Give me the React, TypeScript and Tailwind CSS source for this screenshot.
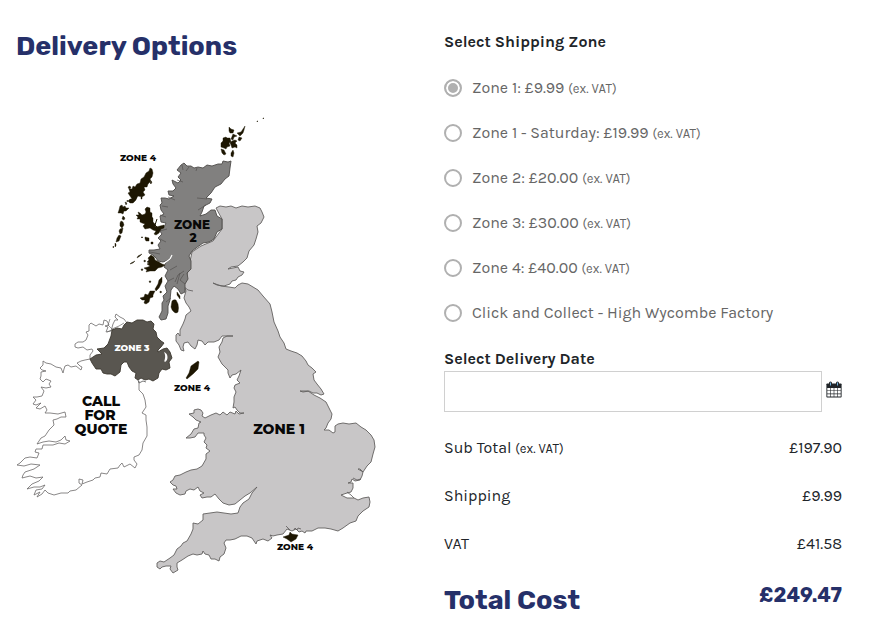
import React, { useState } from "react";

interface ShippingZone {
  id: string;
  name: string;
  price: number;
}

const zones: ShippingZone[] = [
  { id: "zone-1", name: "Zone 1", price: 9.99 },
  { id: "zone-1-saturday", name: "Zone 1 - Saturday", price: 19.99 },
  { id: "zone-2", name: "Zone 2", price: 20 },
  { id: "zone-3", name: "Zone 3", price: 30 },
  { id: "zone-4", name: "Zone 4", price: 40 },
  { id: "collect", name: "Click and Collect - High Wycombe Factory", price: 0 },
];

const SUB_TOTAL = 197.9;

const formatPrice = (value: number) => `£${value.toFixed(2)}`;

function ExVat() {
  return <span className="text-[13px] leading-none">(ex. VAT)</span>;
}

function CalendarIcon() {
  return (
    <svg viewBox="0 0 16 17" className="w-4 h-[17px]" aria-hidden="true">
      <rect x="0.400" y="2.500" width="15.200" height="14" rx="0.800" fill="#212529" />
      <path
        d="M1.300 7h2.900v2.500H1.300zM4.800 7h2.900v2.500H4.800zM8.300 7h2.900v2.500H8.300zM11.800 7h2.900v2.500h-2.900zM1.300 10.100h2.900v2.500H1.300zM4.800 10.100h2.900v2.500H4.800zM8.300 10.100h2.900v2.500H8.300zM11.800 10.100h2.900v2.500h-2.900zM1.300 13.200h2.900v2.400H1.300zM4.800 13.200h2.900v2.400H4.800zM8.300 13.200h2.900v2.400H8.300zM11.800 13.200h2.900v2.400h-2.900z"
        fill="#fff"
      />
      <rect x="3" y="0.500" width="3" height="4.800" rx="1.500" fill="#212529" />
      <rect x="10" y="0.500" width="3" height="4.800" rx="1.500" fill="#212529" />
      <path d="M4.500 1.500v3M11.500 1.500v3" stroke="#6fb0de" strokeWidth="1" />
    </svg>
  );
}

function ZoneMap() {
  return (
    <svg
      viewBox="16 110 398 470"
      className="block w-full"
      role="img"
      aria-label="Map of delivery zones"
      strokeLinejoin="round"
    >
      {/* Republic of Ireland */}
      <path
        d="M127 323L124 319L120 317L116 314L115 317L118 320L115 320L113 324L111 331L106 332L108 327L105 326L109 325L107 321L104 320L103 325L99 324L96 326L91 323L89 325L89 331L86 332L88 335L86 340L83 342L78 342L75 344L75 347L78 348L83 347L87 350L92 349L93 351L90 355L90 359L85 360L81 361L77 363L80 366L82 367L81 370L76 366L71 367L68 365L65 366L64 369L63 373L61 368L56 367L51 364L46 363L43 361L43 365L40 368L42 370L46 371L41 372L41 376L40 379L43 382L46 379L51 381L49 384L51 387L46 388L41 387L44 391L42 396L37 397L33 397L36 400L33 404L36 405L41 403L36 408L40 409L45 406L47 410L45 413L50 413L58 414L65 412L66 417L61 417L57 419L53 420L54 425L49 430L45 436L41 438L37 444L43 442L49 441L56 442L61 440L65 436L66 440L70 441L65 444L59 443L53 445L43 445L42 449L36 449L35 452L39 453L37 458L30 457L25 458L20 463L17 465L24 466L31 464L40 465L34 469L25 472L23 475L22 478L30 476L36 478L43 477L39 481L32 484L27 489L34 487L40 487L45 485L42 489L36 490L34 495L40 492L37 497L42 494L45 490L48 493L54 495L61 493L68 493L70 491L76 490L82 485L79 483L79 479L83 480L82 484L87 482L93 480L95 478L100 477L101 473L107 474L110 469L118 468L120 465L122 463L124 467L130 464L135 468L137 464L134 460L134 457L139 455L142 450L143 443L147 436L147 427L146 420L146 415L142 413L144 410L146 407L145 400L143 394L139 390L139 381"
        fill="#fff"
        stroke="#6c6a69"
        strokeWidth="0.800"
      />
      <path d="M110 319L108 325L112 329L119 326L124 323M107 332L114 329" fill="none" stroke="#6c6a69" strokeWidth="0.700" />

      {/* Zone 1 */}
      <path
        d="M216 208L220 206L226 207L231 206L236 208L242 206L248 207L255 206L260 208L262 212L264 217L261 223L257 226L258 232L256 239L254 245L249 251L247 258L243 262L238 266L231 267L228 269L233 268L238 267L240 271L244 272L242 275L238 277L236 280L232 281L230 284L224 286L217 285L213 283L221 286L229 287L235 288L238 285L242 283L248 284L253 287L258 290L263 296L270 304L272 312L274 322L278 331L280 337L284 343L286 349L291 351L297 353L302 356L306 361L308 365L312 368L316 372L313 374L314 380L317 384L321 389L324 394L321 395L317 393L313 393L309 391L303 392L300 391L308 391L314 395L320 398L326 402L329 408L332 414L331 419L328 423L326 428L324 430L329 430L333 433L335 432L335 426L338 424L343 423L349 424L356 423L361 427L366 430L371 435L374 440L375 447L373 454L371 462L367 466L363 472L360 469L358 469L363 472L362 476L360 480L355 481L352 479L351 482L348 483L353 483L353 488L351 492L347 493L341 495L347 498L354 498L358 500L363 498L369 497L370 502L369 507L363 511L358 516L356 521L350 523L343 528L338 531L331 529L325 528L318 528L312 531L306 531L305 533L302 531L299 532L296 529L292 531L287 529L283 534L277 535L273 536L270 535L272 538L268 541L263 539L257 541L256 544L252 538L247 536L241 536L235 539L230 540L226 540L224 543L226 548L224 554L220 557L219 561L215 559L211 559L209 555L205 554L203 551L202 554L197 555L193 554L188 556L182 560L177 563L177 567L178 570L173 573L170 569L171 566L166 566L162 567L160 569L157 567L157 563L160 561L164 562L170 558L174 555L177 549L181 546L183 543L187 541L191 534L193 529L193 523L198 524L203 520L203 514L210 513L217 512L224 513L231 514L238 513L240 507L243 503L249 499L252 493L257 487L250 493L245 496L240 500L235 504L229 505L223 503L219 499L215 494L211 497L207 497L202 498L200 495L204 493L200 491L198 487L194 490L190 489L186 491L185 494L180 495L176 493L173 489L177 489L176 486L173 485L170 482L173 480L175 476L180 475L186 472L191 470L197 469L202 466L206 459L206 454L210 451L206 448L207 445L204 442L206 438L204 435L204 433L198 433L195 437L190 438L186 438L191 434L194 429L198 428L199 423L201 422L196 420L193 417L189 414L194 413L194 410L198 409L201 410L203 413L202 416L205 418L211 415L216 413L220 415L223 412L227 415L230 412L235 414L236 411L239 414L244 413L240 413L237 410L235 407L233 408L234 402L234 397L236 392L234 388L235 385L240 383L237 380L239 376L241 370L236 374L232 375L230 378L228 373L228 370L222 364L218 357L220 352L219 347L222 342L223 338L227 336L233 336L222 336L219 340L214 342L208 342L205 345L202 341L198 340L197 345L195 349L191 346L188 342L184 343L183 347L184 351L181 350L179 345L176 341L176 335L178 333L180 336L180 330L183 324L185 319L186 315L191 311L189 307L186 303L184 298L186 291L184 286L188 271L192 252L201 246L213 241L222 229L222 219Z"
        fill="#c8c6c7"
        stroke="#62605f"
        strokeWidth="0.900"
      />
      <path d="M183 286L188 290L193 291M353 478L357 480L361 479M347 492L351 495L354 498M286 526L290 530M294 530L295 528L297 530L298 528L301 529" fill="none" stroke="#5b5858" strokeWidth="0.800" />

      {/* Zone 2 */}
      <path
        d="M181 165L184 163L187 166L191 166L194 168L198 167L203 168L207 165L212 166L218 164L222 164L223 161L228 162L231 161L230 168L229 176L225 179L221 184L215 187L211 193L206 198L212 199L210 203L204 206L202 212L200 216L206 214L211 210L215 210L217 216L222 219L222 229L217 232L214 239L209 242L203 243L196 248L192 251L189 256L191 261L191 269L187 273L188 279L185 284L185 292L181 294L178 289L174 286L171 290L170 300L168 306L168 313L166 319L161 320L159 317L162 311L162 303L164 300L163 296L167 292L165 286L168 281L165 276L168 270L164 267L166 262L171 259L163 262L158 261L156 258L153 255L149 253L149 250L154 250L160 249L158 245L161 241L158 238L162 234L159 230L164 227L166 223L161 222L160 216L164 214L161 210L160 205L162 203L161 198L165 198L169 199L174 196L169 195L168 191L173 191L176 188L173 184L172 180L178 183L181 180L178 177L181 173L177 170Z"
        fill="#81807f"
        stroke="#4e4c4a"
        strokeWidth="0.900"
      />
      <path
        d="M182 165l1 5M189 167l-3 4M197 168l-1 3M177 180l6 2M168 197l7 3M197 198l10 1M206 205l-8 5M162 206l6 1M160 215l6 2M160 231l7 -2M160 239l6 3M170 270l7-4M168 281l6-3M175 282l3-7 6-4M185 284l-5-4 4-6M177 284l3-11M166 302l5-4M150 252l10 2"
        fill="none"
        stroke="#4d4a48"
        strokeWidth="0.600"
      />
      <path d="M163 264l7-5 2-4" fill="none" stroke="#fff" strokeWidth="1.200" />

      {/* Northern Ireland */}
      <path
        d="M124 325L127 322L132 323L137 320L143 320L147 322L151 321L154 324L153 329L156 332L157 337L161 341L164 343L161 347L158 350L158 352L163 349L167 348L170 352L172 358L169 362L170 368L166 370L162 369L159 373L158 378L153 381L149 379L145 380L141 378L138 380L135 378L136 373L132 371L129 367L127 362L124 362L121 365L120 372L115 376L111 374L107 374L103 373L101 369L96 369L92 363L90 359L96 355L102 354L97 349L104 348L108 344L111 336L112 330L117 328L122 329Z"
        fill="#595650"
        stroke="#3c3830"
        strokeWidth="0.900"
      />
      <path d="M164 352c4 1 5 8 1 10-2-1 2-4-1-10z" fill="#fff" />
      <path d="M138 380l1 3 4-2 3 1" fill="none" stroke="#555" strokeWidth="0.800" />

      {/* Zone 4 islands */}
      <g fill="#1d1602" stroke="#1d1602" strokeWidth="0.400">
        {/* Outer Hebrides */}
        <path d="M150 168l2 1 1 4-1 4-2 2 1 2-3 3-1 3-3 0 1 3-2 2 2 3-3 2-4-1-2 3-4 0-2-3-2-3 2-1-1-3 3 0 1-3 2 1 2-3 3-1 1-4 3-2 2-4 3-2z" />
        <path d="M134 195l3 1-1 4-3 3-3 0-2-2 2-2 2 0z M151 181l1 1-1 2-1-1z M141 197l1 0 0 2-1 0z M129 186l2 1-1 2-2-1z" />
        <path d="M120 206l2-1 1 2 2-1 1 2 3 0-3 3-2 0-1 3-2-1-3 0 1-3z M125 202l2 1-1 2z M127 200l1 1-1 1z" />
        <path d="M123 216l2 2-1 2-2-1z M121 221l2 1 1 3-2 3-2-2 0-3z M120 229l3-1-1 5-2 1-1-3z M119 235l2 1-2 5-3 1 1-4z M115 243l1 1 0 2-1 1z M113 246l1 1-1 1z" />
        {/* Skye */}
        <path d="M147 207l3 1 0 4 2 1 0 4 1 1 0 4 2 2 1 3 4-1 4-1 0 3-3 1-2 4-3 2-2-1 2-3-3-1-3-2-5 1-2-3 2-2-3-1-2-1 0-3-3 0 1-2-2-2 3 0-1-3 2 1 2 2 3-1 1-2-1-3z" />
        <path d="M157 219l-2 6 2 2" fill="none" strokeWidth="1" />
        <path d="M145 237l4 1 0 3-3 0-1-2z M151 242l2 0 0 2-2 0z M141 237l2 0-1 1z M131 263l4-2-2 2-3 1z M138 256l4-2-2 2-3 2z" />
        {/* Mull */}
        <path d="M151 255l3 2 1 3 4 2 3 2 3 1-3 2-4 1-3 3-5 0-4 1 1-2-3-2 4-1 2-1-3-2 2-1-2-1 2-2-1-2z M144 260l2 1-2 1z M141 269l2 0-1 2z" />
        {/* Islay and Jura */}
        <path d="M162 277l0 5-3 6-3 3-1-2 3-5 1-4z M153 291l2 0-2 4 0 2-3 1-1 4-3 2-2-1 1-3-3 0-2-2 4-1 1-3 3 1 2-4z M149 281l2 0-1 2z M160 291l2 1-2 1z" />
        <path d="M172 301q2-2 4-1l2 4q1 4 0 8-2 2-4 0-2-1-3-5z M177 292l3 4 0 3-3-4z" />
        <path d="M198 361l1 1-1 7-5 5-6 5-1-1 3-5 2-7z" />
        <path d="M283 537l6-2 1-3 2 2 6 1-2 4-5 3-4-3z" />
        {/* Orkney and Shetland */}
        <path d="M223 138l3-1 1 1 3 0 1 4-2 1 1 3-3 1-1 2-2-1-3-1 0-4 2-2z M232 141l3-1 2 1-2 2 2 2 0 3-2-1-3 1-1-3-1-2z M221 149l3 1 2 4-2 1-2-2z M233 150l1 3-1 4-2-1 0-3z M229 127l2 2 3 1-1 3-3 0-1-2z M233 134l4 2-3 1-1 3-2-1z M239 137l3 1-2 3-2-1z M237 133l4-1 4-6-1 4-1 3-3 3z" />
        <path d="M257 121l1 0-1 1z M263 118l1 0-1 1z" />
      </g>

      <g className="font-['Montserrat','Inter',sans-serif] font-extrabold" textAnchor="middle" fill="#080808">
        <text x="138" y="161" fontSize="9">ZONE 4</text>
        <text x="192" y="391" fontSize="9">ZONE 4</text>
        <text x="295" y="550" fontSize="9">ZONE 4</text>
        <text x="132" y="351" fontSize="9" fill="#fff">ZONE 3</text>
        <text fontSize="12">
          <tspan x="192" y="229">ZONE</tspan>
          <tspan x="193" dy="13">2</tspan>
        </text>
        <text x="279" y="434" fontSize="14">ZONE 1</text>
        <text fontSize="14">
          <tspan x="101" y="406">CALL</tspan>
          <tspan x="100" dy="14">FOR</tspan>
          <tspan x="101" dy="14">QUOTE</tspan>
        </text>
      </g>
    </svg>
  );
}

export default function App() {
  const [selected, setSelected] = useState("zone-1");
  const [date, setDate] = useState("");

  const shipping = zones.find((zone) => zone.id === selected)?.price ?? 0;
  const vat = (SUB_TOTAL + shipping) * 0.2;
  const total = SUB_TOTAL + shipping + vat;

  const rows = [
    { label: "Sub Total", value: SUB_TOTAL, exVat: true },
    { label: "Shipping", value: shipping, exVat: false },
    { label: "VAT", value: vat, exVat: false },
  ];

  return (
    <main className="min-h-screen bg-white pt-7 pl-4 pr-10 pb-4 font-['Karla','Inter',sans-serif] text-base leading-6 text-[#212529]">
      <div className="grid grid-cols-2 gap-[30px]">
        <section>
          <h2 className="mb-[46px] font-['Rubik','Inter',sans-serif] text-[27px] leading-9 font-bold text-[#263069]">
            Delivery Options
          </h2>
          <ZoneMap />
        </section>

        <section className="pt-0.5">
          <fieldset>
            <legend className="mb-[22px] font-bold">Select Shipping Zone</legend>
            <div className="flex flex-col gap-[21px]">
              {zones.map((zone) => (
                <label
                  key={zone.id}
                  htmlFor={zone.id}
                  className="flex items-center gap-2.5 cursor-pointer text-[#666]"
                >
                  <input
                    id={zone.id}
                    type="radio"
                    name="shipping-zone"
                    checked={selected === zone.id}
                    onChange={() => setSelected(zone.id)}
                    className="appearance-none shrink-0 w-[18px] h-[18px] rounded-full border-2 border-[#b0b0b0] bg-white checked:bg-[#b0b0b0] checked:shadow-[inset_0_0_0_2px_white]"
                  />
                  <span>
                    {zone.id === "collect" ? (
                      zone.name
                    ) : (
                      <>
                        {zone.name}: {formatPrice(zone.price)} <ExVat />
                      </>
                    )}
                  </span>
                </label>
              ))}
            </div>
          </fieldset>

          <label htmlFor="delivery-date" className="mt-[22px] block font-bold">
            Select Delivery Date
          </label>
          <div className="flex items-center gap-1">
            <input
              id="delivery-date"
              type="text"
              value={date}
              onChange={(e) => setDate(e.target.value)}
              className="min-w-0 flex-1 h-[41px] border border-[#d0d0d0] px-3 outline-none"
            />
            <button type="button" aria-label="Open calendar" className="mb-1 cursor-pointer">
              <CalendarIcon />
            </button>
          </div>

          <dl className="mt-6 flex flex-col gap-6">
            {rows.map((row) => (
              <div key={row.label} className="flex justify-between">
                <dt>
                  {row.label} {row.exVat && <ExVat />}
                </dt>
                <dd>{formatPrice(row.value)}</dd>
              </div>
            ))}
            <div className="flex items-start justify-between font-['Rubik','Inter',sans-serif] font-bold text-[#263069]">
              <dt className="pt-0.5 text-[27px] leading-9">Total Cost</dt>
              <dd className="text-xl leading-[30px]">{formatPrice(total)}</dd>
            </div>
          </dl>
        </section>
      </div>
    </main>
  );
}
